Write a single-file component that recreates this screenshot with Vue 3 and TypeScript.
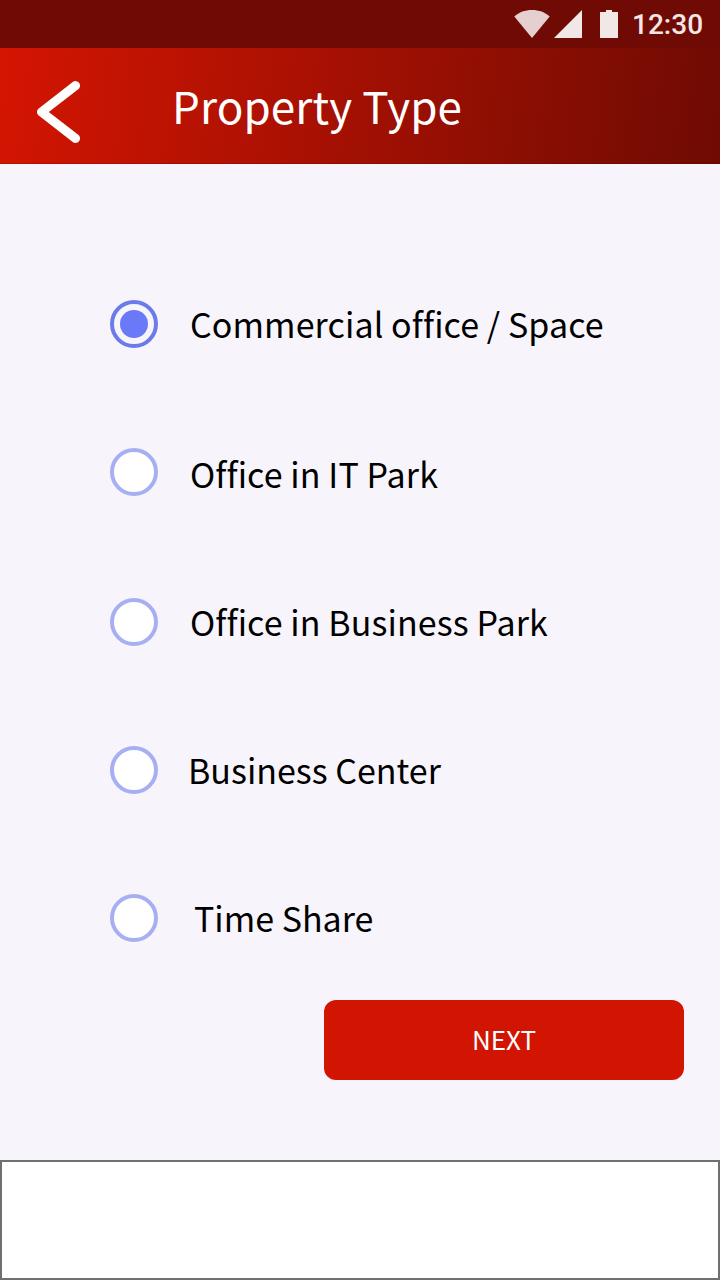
<script setup lang="ts">
import { ref } from 'vue'

interface PropertyOption {
  id: string
  label: string
}

const options: PropertyOption[] = [
  { id: 'commercial', label: 'Commercial office / Space' },
  { id: 'it-park', label: 'Office in IT Park' },
  { id: 'business-park', label: 'Office in Business Park' },
  { id: 'business-center', label: 'Business Center' },
  { id: 'time-share', label: 'Time Share' },
]

const selected = ref<string>('commercial')
</script>

<template>
  <div class="screen">
    <div class="status-bar">
      <svg class="wifi" width="36" height="28" viewBox="0 0 36 28">
        <path d="M0.3 6.4C5 2.2 11 0 18 0S31 2.2 35.7 6.4L18 28Z" fill="#e6cfcf" />
      </svg>
      <svg class="signal" width="28" height="28" viewBox="0 0 28 28">
        <path d="M28 0V28H0Z" fill="#f1e7e7" />
      </svg>
      <svg class="battery" width="18" height="28" viewBox="0 0 18 28">
        <path d="M6 0H12V2H18V28H0V2H6Z" fill="#f1e7e7" />
      </svg>
      <span class="clock">12:30</span>
    </div>

    <header class="app-bar">
      <button class="back" type="button" aria-label="Back">
        <svg width="44" height="64" viewBox="0 0 44 64">
          <path
            d="M39.5 5.6L5.5 32L39.5 58.4"
            fill="none"
            stroke="#fff"
            stroke-width="9"
            stroke-linecap="round"
            stroke-linejoin="round"
          />
        </svg>
      </button>
      <h1 class="title">Property Type</h1>
    </header>

    <main class="content">
      <div class="options" role="radiogroup">
        <div
          v-for="option in options"
          :key="option.id"
          class="option"
          :class="[option.id, { checked: selected === option.id }]"
          role="radio"
          :aria-checked="selected === option.id"
          @click="selected = option.id"
        >
          <span class="radio"><span v-if="selected === option.id" class="dot"></span></span>
          <span class="label">{{ option.label }}</span>
        </div>
      </div>
      <button class="next" type="button">NEXT</button>
    </main>

    <footer class="footer"></footer>
  </div>
</template>

<style>
body {
  margin: 0;
}
</style>

<style scoped>
.screen {
  display: flex;
  flex-direction: column;
  width: 720px;
  height: 1280px;
  overflow: hidden;
  background: #f7f5fb;
  font-family: 'Noto Sans CJK SC', 'Noto Sans', sans-serif;
  font-variant-ligatures: none;
}

.status-bar {
  display: flex;
  flex: none;
  align-items: center;
  box-sizing: border-box;
  height: 48px;
  padding-left: 514px;
  background: #6f0b04;
}

.status-bar svg {
  flex: none;
}

.signal {
  margin-left: 4px;
}

.battery {
  margin-left: 18px;
}

.clock {
  margin-left: 14px;
  padding-top: 2px;
  color: #f5e6e5;
  font: 500 28px/48px Roboto, sans-serif;
}

.app-bar {
  display: flex;
  flex: none;
  box-sizing: border-box;
  height: 116px;
  padding-left: 36px;
  background: linear-gradient(97deg, #d41502 0%, #6f0b03 100%);
  box-shadow: inset 0 -1px 0 rgba(80, 0, 0, 0.2);
}

.back {
  flex: none;
  width: 44px;
  height: 64px;
  margin: 32px 0 0;
  padding: 0;
  border: 0;
  background: none;
}

.back svg {
  display: block;
}

.title {
  margin: 25px 0 0 92px;
  color: #fff;
  font-size: 44px;
  font-weight: 400;
  line-height: 64px;
  letter-spacing: 0.12px;
}

.content {
  display: flex;
  flex: none;
  flex-direction: column;
  box-sizing: border-box;
  height: 996px;
  padding: 136px 36px 0 110px;
}

.option {
  display: flex;
  height: 48px;
  margin-bottom: 100px;
}

.option.it-park {
  margin-bottom: 102px;
}

.option.time-share {
  margin-bottom: 58px;
}

.radio {
  display: flex;
  flex: none;
  align-items: center;
  justify-content: center;
  box-sizing: border-box;
  width: 48px;
  height: 48px;
  border: 4px solid #a7aff3;
  border-radius: 50%;
  background: #fff;
}

.checked .radio {
  border-color: #6c7bea;
  background: #f7f5fb;
}

.dot {
  width: 28px;
  height: 28px;
  border-radius: 50%;
  background: #6979f8;
}

.label {
  margin-left: 32px;
  color: #000;
  font-size: 34px;
  line-height: 48px;
  letter-spacing: 0.1px;
  white-space: nowrap;
}

.it-park .label {
  padding-top: 2px;
}

.business-center .label {
  margin-left: 30px;
  letter-spacing: 0;
}

.time-share .label {
  margin-left: 36px;
  letter-spacing: 0;
}

.next {
  align-self: flex-end;
  width: 360px;
  height: 80px;
  padding: 0 0 2px;
  border: 0;
  border-radius: 12px;
  background: #d21502;
  color: #fff;
  font: 400 26px/78px 'Noto Sans CJK SC', 'Noto Sans', sans-serif;
}

.footer {
  flex: none;
  box-sizing: border-box;
  height: 120px;
  border: 2px solid #707070;
  background: #fff;
}
</style>
